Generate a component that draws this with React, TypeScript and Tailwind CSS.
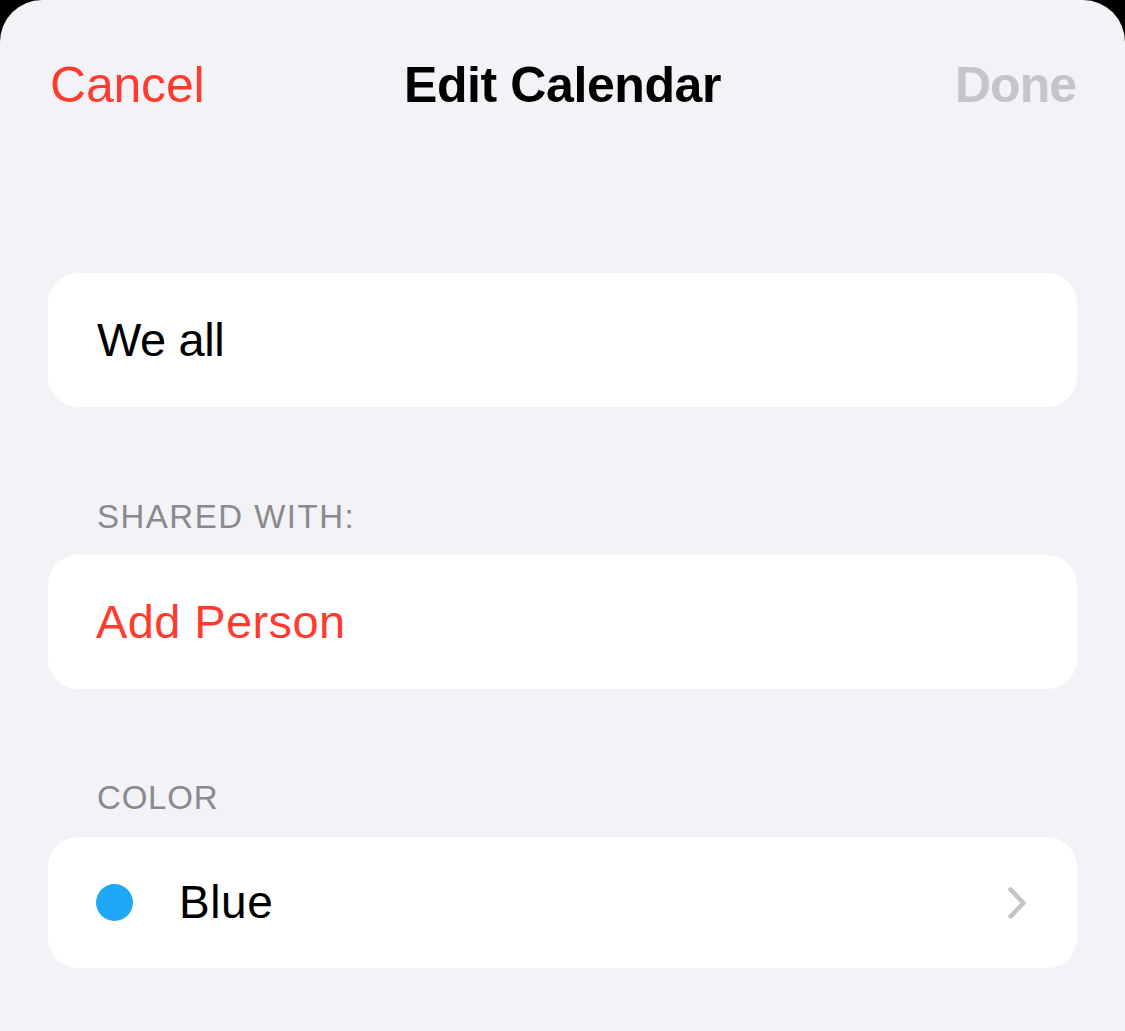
import React from "react";

export default function App() {
  return (
    <div className="h-[1031px] w-full bg-black overflow-hidden" style={{ fontFamily: '"Liberation Sans", Arial, sans-serif' }}>
      <div className="h-full bg-[#f2f2f7] rounded-t-[42px] px-[48px]">
        <div className="h-[170px] grid grid-cols-[1fr_auto_1fr] items-center">
          <div className="pl-[2px] text-[50px] text-[#ff3b30] tracking-[-0.2px] leading-none">Cancel</div>
          <div className="text-[50px] font-bold text-black tracking-[-0.4px] leading-none">Edit Calendar</div>
          <div className="justify-self-end pr-[1px] text-[50px] font-bold text-[#c5c5c8] tracking-[-1px] leading-none">Done</div>
        </div>

        <div className="mt-[103px] h-[134px] bg-white rounded-[30px] flex items-center pl-[49px]">
          <span className="text-[47px] text-black tracking-[-0.4px]">We all</span>
        </div>

        <div className="mt-[90px] h-10 flex items-center pl-[49px] text-[33px] text-[#8a8a8e] tracking-[1.5px]">SHARED WITH:</div>
        <div className="mt-[18px] h-[134px] bg-white rounded-[30px] flex items-center pl-[48px]">
          <span className="text-[47px] text-[#ff3b30] tracking-[0.4px]">Add Person</span>
        </div>

        <div className="mt-[89px] h-10 flex items-center pl-[49px] text-[33px] text-[#8a8a8e] tracking-[0.8px]">COLOR</div>
        <div className="mt-[19px] h-[131px] bg-white rounded-[30px] flex items-center pl-[48px] pr-[50px]">
          <div className="w-[37px] h-[37px] rounded-full bg-[#1ea8f7] shrink-0" />
          <span className="ml-[46px] text-[46px] text-black tracking-[0.6px]">Blue</span>
          <div className="flex-1" />
          <svg width="20" height="34" viewBox="0 0 20 34" fill="none">
            <polyline points="3.5,3.5 16.5,17 3.5,30.5" stroke="#c4c4c7" strokeWidth="4.5" strokeLinecap="round" strokeLinejoin="round" />
          </svg>
        </div>
      </div>
    </div>
  );
}
